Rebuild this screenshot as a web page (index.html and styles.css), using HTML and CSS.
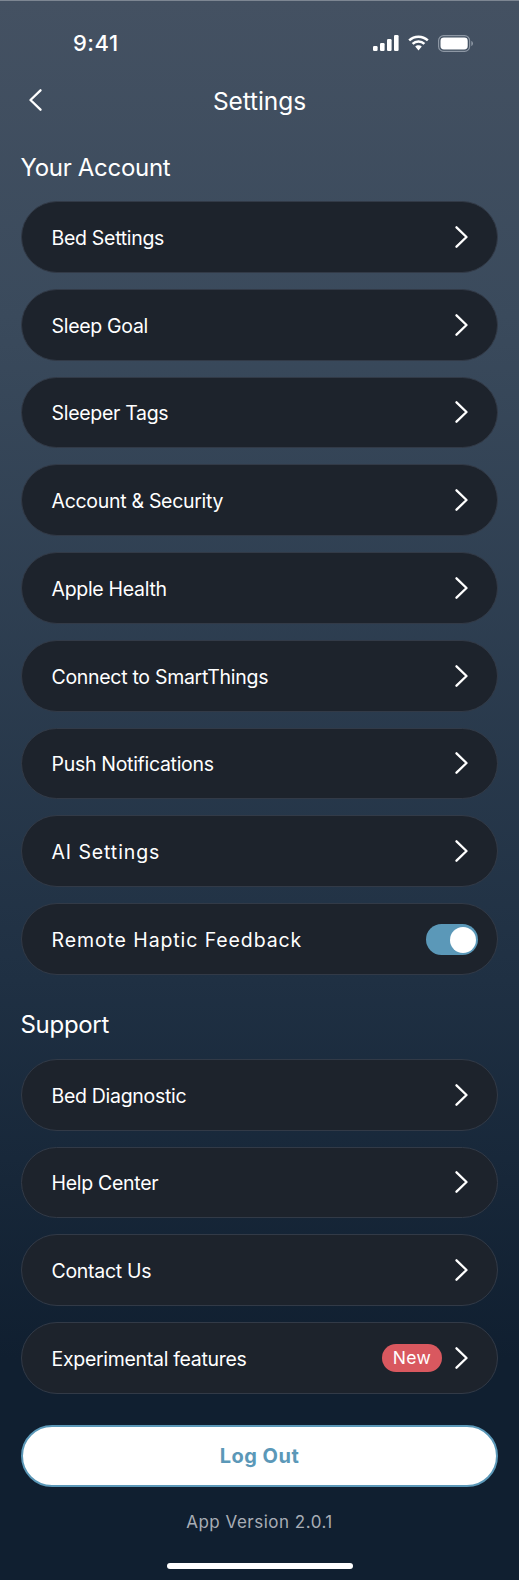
FILE: index.html
```html
<!DOCTYPE html>
<html lang="en">
<head>
<meta charset="utf-8">
<title>Settings</title>
<link rel="stylesheet" href="styles.css">
</head>
<body>
<svg class="defs" width="0" height="0" aria-hidden="true">
  <symbol id="chev" viewBox="0 0 13 22"><path d="M1.500 1.300 11.500 11 1.500 20.700" fill="none" stroke="#fff" stroke-width="2.300" stroke-linecap="round" stroke-linejoin="round"/></symbol>
</svg>
<main class="screen">
  <header class="status">
    <span class="time">9:41</span>
    <span class="status-icons">
      <svg class="signal" viewBox="0 0 26 16"><rect x="0" y="11" width="4.600" height="5" rx="1.200"/><rect x="7" y="8" width="4.600" height="8" rx="1.200"/><rect x="14" y="4" width="4.600" height="12" rx="1.200"/><rect x="21" y="0" width="4.600" height="16" rx="1.200"/></svg>
      <svg class="wifi" viewBox="0 0 24 17"><path d="M12 3.100c3.400 0 6.600 1.300 9 3.600l1.800-1.900A15.600 15.600 0 0 0 12 .5 15.600 15.600 0 0 0 1.200 4.800L3 6.700a13 13 0 0 1 9-3.600Z"/><path d="M12 8.200c2 0 3.900.8 5.300 2.100l1.900-1.900A10.400 10.400 0 0 0 12 5.600 10.400 10.400 0 0 0 4.800 8.400l1.900 1.900A7.700 7.700 0 0 1 12 8.200Z"/><path d="M12 10.800c-1.300 0-2.600.5-3.500 1.400L12 16.500l3.500-4.300a5 5 0 0 0-3.500-1.400Z"/></svg>
      <svg class="battery" viewBox="0 0 36 17"><rect x=".6" y=".6" width="31" height="15.800" rx="5" fill="none" stroke="#8d97a4" stroke-width="1.200"/><rect x="2.500" y="2.500" width="27.200" height="12" rx="3.400"/><path d="M33.300 6v5c1-.3 1.700-1.400 1.700-2.500S34.300 6.300 33.300 6Z" fill="#8d97a4"/></svg>
    </span>
  </header>
  <nav class="topbar">
    <svg class="back" viewBox="0 0 13 22"><path d="M11.500 1.300 1.500 11l10 9.700" fill="none" stroke="#fff" stroke-width="2.300" stroke-linecap="round" stroke-linejoin="round"/></svg>
    <h1 class="title">Settings</h1>
  </nav>

  <h2 class="section-title">Your Account</h2>
  <ul class="list">
    <li class="row"><span class="label">Bed Settings</span><svg class="chev"><use href="#chev"/></svg></li>
    <li class="row"><span class="label">Sleep Goal</span><svg class="chev"><use href="#chev"/></svg></li>
    <li class="row"><span class="label">Sleeper Tags</span><svg class="chev"><use href="#chev"/></svg></li>
    <li class="row"><span class="label">Account &amp; Security</span><svg class="chev"><use href="#chev"/></svg></li>
    <li class="row"><span class="label">Apple Health</span><svg class="chev"><use href="#chev"/></svg></li>
    <li class="row"><span class="label">Connect to SmartThings</span><svg class="chev"><use href="#chev"/></svg></li>
    <li class="row"><span class="label">Push Notifications</span><svg class="chev"><use href="#chev"/></svg></li>
    <li class="row"><span class="label wide">AI Settings</span><svg class="chev"><use href="#chev"/></svg></li>
    <li class="row"><span class="label wide">Remote Haptic Feedback</span><span class="switch"><span class="knob"></span></span></li>
  </ul>

  <h2 class="section-title support">Support</h2>
  <ul class="list">
    <li class="row"><span class="label">Bed Diagnostic</span><svg class="chev"><use href="#chev"/></svg></li>
    <li class="row"><span class="label">Help Center</span><svg class="chev"><use href="#chev"/></svg></li>
    <li class="row"><span class="label">Contact Us</span><svg class="chev"><use href="#chev"/></svg></li>
    <li class="row"><span class="label">Experimental features</span><span class="badge">New</span><svg class="chev"><use href="#chev"/></svg></li>
  </ul>

  <button class="logout" type="button">Log Out</button>
  <p class="version">App Version 2.0.1</p>
  <div class="home"></div>
</main>
</body>
</html>
```
FILE: styles.css
```css
* { box-sizing: border-box; }
html, body { margin: 0; padding: 0; }
body { width: 519px; height: 1580px; overflow: hidden; font-family: Inter, "Liberation Sans", sans-serif; color: #fff; }
.defs { position: absolute; }
.screen {
  width: 519px; height: 1580px; padding: 0 21px;
  border-top: 1px solid #7d8692;
  background: linear-gradient(180deg, #445162 0%, #3a4a5c 20%, #1f3043 62%, #101f30 86%, #101f30 100%);
  display: flex; flex-direction: column;
}
.status { height: 40px; margin-top: 22px; padding: 0 24px 0 52px; display: flex; align-items: center; justify-content: space-between; }
.time { font-size: 22px; font-weight: 500; letter-spacing: .5px; }
.status-icons { display: flex; align-items: center; gap: 8px; fill: #fff; }
.signal { width: 26px; height: 16px; }
.wifi { width: 23px; height: 16px; }
.battery { width: 36px; height: 17px; }
.topbar { height: 40px; margin-top: 18px; position: relative; display: flex; align-items: center; justify-content: center; }
.back { position: absolute; left: 7.500px; top: 7.500px; width: 13px; height: 22px; }
.title { margin: -1px 0 0; font-size: 24.500px; font-weight: 400; letter-spacing: -.1px; line-height: 40px; }
.section-title { margin: 31px 0 0; font-size: 24px; font-weight: 400; letter-spacing: -.3px; line-height: 32px; height: 32px; text-indent: -.5px; }
.support { margin-top: 34px; }
.list { list-style: none; margin: 17px 0 0; padding: 0; display: flex; flex-direction: column; gap: 16px; }
.support + .list { margin-top: 18px; }
.row {
  height: 71.750px; border-radius: 36px; background: #1d232c;
  border: 1.500px solid #323a47;
  display: flex; align-items: center; padding: 0 29px 0 29.500px;
}
.label { flex: 1; padding-top: 2px; font-size: 19.500px; font-weight: 400; letter-spacing: -.3px; }
.wide { letter-spacing: .9px; }
.chev { width: 13px; height: 22px; flex: none; }
.switch { width: 52px; height: 31px; border-radius: 16px; background: #5b98b8; display: flex; align-items: center; justify-content: flex-end; padding-right: 2.500px; margin: 1.500px -10px 0 0; }
.knob { width: 26px; height: 26px; border-radius: 50%; background: #fff; }
.badge { height: 28px; width: 60px; text-align: center; margin-right: 13px; border-radius: 14px; background: #d9585f; font-size: 17.500px; letter-spacing: .3px; line-height: 28px; }
.logout { margin: 31px 0 0; height: 62px; padding-top: 2px; border-radius: 31px; background: #fff; border: 2.500px solid #5b98b8; color: #5b98b8; font: 700 20px Inter, "Liberation Sans", sans-serif; letter-spacing: .5px; }
.version { margin: 21px 0 0; text-align: center; font-size: 17px; letter-spacing: .5px; color: #a8adb5; line-height: 28px; }
.home { width: 186px; height: 6px; border-radius: 3px; background: #fff; margin: 27px auto 0; }
```
